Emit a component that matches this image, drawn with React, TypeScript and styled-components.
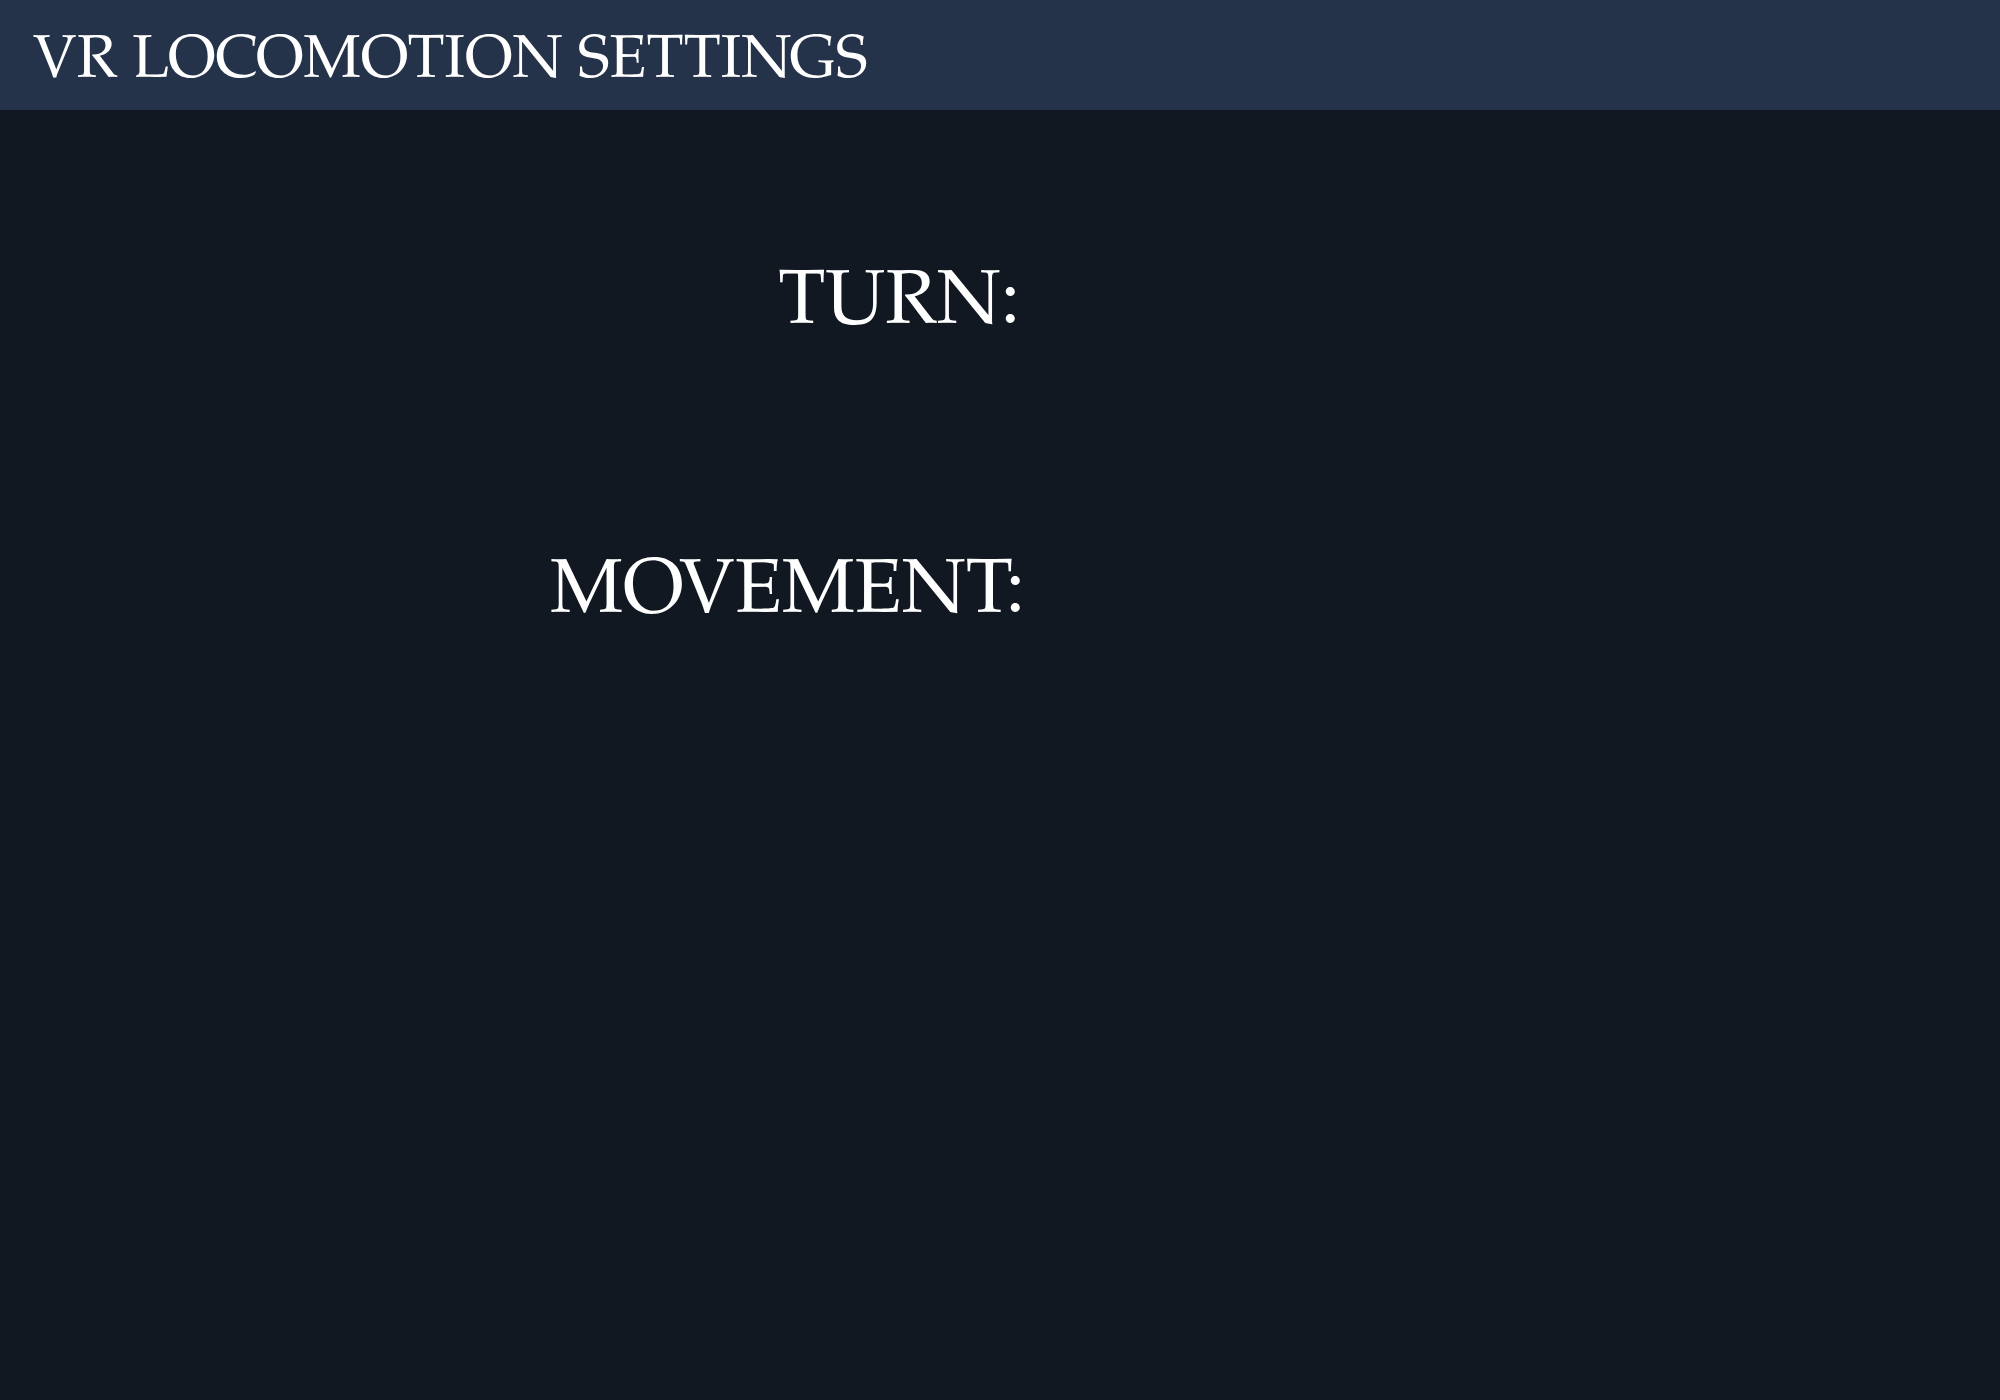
import styled, { createGlobalStyle } from "styled-components";

const GlobalStyle = createGlobalStyle`
  html, body {
    margin: 0;
    padding: 0;
    background: #111821;
  }
`;

const Page = styled.div`
  min-height: 1400px;
  background: #111821;
  color: #fff;
  font-family: "TeX Gyre Pagella", "Palatino Linotype", Palatino, serif;
`;

const Header = styled.header`
  height: 110px;
  box-sizing: border-box;
  background: #24334a;
  display: flex;
  align-items: center;
  padding: 18px 33px 0;
`;

const Title = styled.h1`
  margin: 0;
  font-weight: normal;
  font-size: 60.5px;
  line-height: 1;
  white-space: nowrap;
`;

const Settings = styled.div`
  display: grid;
  grid-template-columns: 1025px 1fr;
  row-gap: 212px;
  padding-top: 158px;
`;

const Label = styled.div<{ $inset?: number }>`
  text-align: right;
  font-size: 77px;
  line-height: 1;
  padding-right: ${(p) => p.$inset ?? 0}px;
`;

export default function App() {
  return (
    <>
      <GlobalStyle />
      <Page>
        <Header>
          <Title>VR LOCOMOTION SETTINGS</Title>
        </Header>
        <Settings>
          <Label $inset={5}>TURN:</Label>
          <div />
          <Label>MOVEMENT:</Label>
          <div />
        </Settings>
      </Page>
    </>
  );
}
